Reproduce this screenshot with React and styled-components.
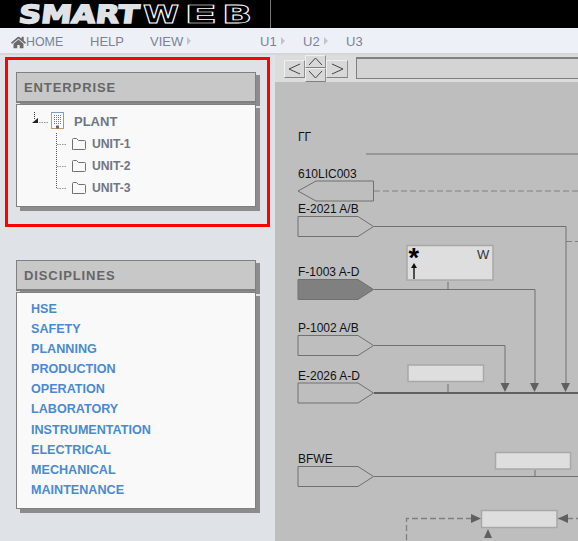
import React from 'react';
import styled, { createGlobalStyle } from 'styled-components';
import { FaHome } from 'react-icons/fa';

const GlobalStyle = createGlobalStyle`
  html, body {
    margin: 0;
    padding: 0;
    background: #dfe3e7;
    font-family: "Liberation Sans", Arial, sans-serif;
  }
`;

const Page = styled.div`
  width: 578px;
  height: 541px;
  overflow: hidden;
  display: flex;
  flex-direction: column;
`;

const Header = styled.header`
  height: 28px;
  flex: none;
  background: #000;
  display: flex;
`;

const LogoBox = styled.div`
  width: 270px;
  height: 28px;
  border-right: 1px solid #777;
`;

const MenuBar = styled.nav`
  height: 25px;
  flex: none;
  background: #eef0f8;
  display: grid;
  grid-template-columns: 90px 60px 110px 43px 43px 1fr;
  align-items: center;
  border-bottom: 2px solid #d4d6da;
`;

const MenuItem = styled.div`
  display: flex;
  align-items: center;
  font-size: 13px;
  line-height: 15px;
  color: #7a8296;
  padding-top: 1px;
`;

const HomeItem = styled(MenuItem)`
  padding-left: 11px;
  font-size: 12.4px;
  padding-top: 3px;
  svg {
    color: #6a6a6a;
    margin-right: 0;
  }
`;

const Caret = styled.span`
  width: 0;
  height: 0;
  margin-left: 4px;
  border-left: 4px solid #c2c4c8;
  border-top: 4px solid transparent;
  border-bottom: 4px solid transparent;
`;

const Body = styled.div`
  flex: 1;
  display: flex;
  min-height: 0;
`;

const Sidebar = styled.aside`
  width: 275px;
  flex: none;
  background: #dfe3e7;
  padding: 2px 0 0 5px;
  box-sizing: border-box;
`;

const Highlight = styled.div`
  width: 265px;
  height: 170px;
  box-sizing: border-box;
  border: 3px solid #ff0000;
  padding: 12px 8px;
  margin-bottom: 33px;
`;

const Panel = styled.section`
  width: 240px;
  margin-left: ${(p) => p.$indent || 0}px;
`;

const PanelTitle = styled.div`
  height: 31px;
  box-sizing: border-box;
  background: #c8c8c8;
  border: 1px solid #808080;
  border-bottom-width: 2px;
  box-shadow: 4px 3px 0 #8c8c8c;
  padding-left: 7px;
  font-size: 13px;
  font-weight: bold;
  letter-spacing: 0.9px;
  line-height: 30px;
  color: #666;
`;

const PanelBody = styled.div`
  margin-top: 1px;
  height: ${(p) => p.$height}px;
  box-sizing: border-box;
  background: #f9f9f9;
  border: 1px solid #808080;
  box-shadow: 4px 4px 0 #8c8c8c;
`;

const TreeRoot = styled.div`
  display: flex;
  align-items: center;
  height: 22px;
  padding: 5px 0 1px 14px;
`;

const RootLabel = styled.span`
  margin-left: 9px;
  font-size: 13px;
  font-weight: bold;
  color: #6f7684;
`;

const TreeRow = styled.div`
  display: flex;
  align-items: center;
  height: 22px;
  padding-left: 39px;
`;

const RowLabel = styled.span`
  margin-left: 5px;
  font-size: 12.2px;
  font-weight: bold;
  color: #6f7684;
`;

const LinkList = styled.ul`
  list-style: none;
  margin: 0;
  padding: 5.5px 0 0 14px;
`;

const LinkItem = styled.li`
  height: 20.2px;
  line-height: 20px;
  font-size: 12.6px;
  font-weight: bold;
  color: #4a8ad0;
`;

const Main = styled.main`
  flex: 1;
  display: flex;
  flex-direction: column;
  min-width: 0;
`;

const Toolbar = styled.div`
  height: 27px;
  flex: none;
  background: #dcdcdc;
  display: flex;
  align-items: center;
  padding-left: 9px;
`;

const ToolButton = styled.button`
  width: ${(p) => p.$w || 21}px;
  height: ${(p) => p.$h || 18}px;
  padding: 0;
  flex: none;
  background: #d8d8d8;
  border: 1px solid;
  border-color: #efefef #909090 #808080 #efefef;
  display: flex;
  align-items: center;
  justify-content: center;
  svg {
    display: block;
  }
`;

const UpDown = styled.div`
  display: flex;
  flex-direction: column;
  margin-top: -1px;
`;

const AddressBox = styled.div`
  flex: 1;
  height: 22px;
  margin-left: 8px;
  margin-top: -1px;
  box-sizing: border-box;
  background: #d4d4d4;
  border: 1px solid #808080;
  border-top-width: 2px;
  border-right: none;
`;

const Canvas = styled.div`
  flex: 1;
  background: #bebebe;
  min-height: 0;
  svg {
    display: block;
    font-family: "Liberation Sans", Arial, sans-serif;
  }
`;

const Chevron = ({ d, w = 15, h = 12 }) => (
  <svg width={w} height={h} viewBox={`0 0 ${w} ${h}`}>
    <path d={d} fill="none" stroke="#444" strokeWidth="1" />
  </svg>
);

// outlined letters of the logo, stretched one by one
const LogoLetter = ({ x, stretch, children }) => (
  <text
    transform={`translate(${x} 23) scale(${stretch} 1)`}
    fontFamily="DejaVu Sans"
    fontWeight="bold"
    fontSize="24"
    fill="#000"
    stroke="#fff"
    strokeWidth="1.1"
    vectorEffect="non-scaling-stroke"
  >
    {children}
  </text>
);

const Logo = () => (
  <svg width="270" height="28" viewBox="0 0 270 28">
    <g transform="translate(15 23) skewX(-7)">
      <text x="3" y="0" fontFamily="DejaVu Sans" fontWeight="bold" fontSize="25" fill="#dfe3e7" stroke="#dfe3e7" strokeWidth="1.6" textLength="120" lengthAdjust="spacingAndGlyphs">SMART</text>
    </g>
    <LogoLetter x={143} stretch={1.36}>W</LogoLetter>
    <LogoLetter x={184} stretch={2.05}>E</LogoLetter>
    <LogoLetter x={222} stretch={1.65}>B</LogoLetter>
  </svg>
);

const Expander = () => (
  <svg width="20" height="20" viewBox="0 0 20 20">
    <path d="M3.5 1v8" stroke="#333" strokeDasharray="1 1" />
    <path d="M1 12l6-5v5z" fill="#222" />
    <path d="M8 11.5h9" stroke="#999" strokeDasharray="1.5 1" />
  </svg>
);

const Building = () => (
  <svg width="14" height="18" viewBox="0 0 14 18">
    <rect x="0.5" y="0.5" width="12" height="16" fill="#fdfdfd" stroke="#c99a6b" />
    <path d="M0.5 0.5h12v16" fill="none" stroke="#7a9cc6" />
    <path d="M3 3.5h7M3 5.5h7M3 7.5h7M3 9.5h7M3 11.5h7" stroke="#778" strokeDasharray="1 1" />
    <rect x="5" y="13.5" width="3" height="3" fill="#666" />
  </svg>
);

const Folder = () => (
  <svg width="16" height="14" viewBox="0 0 16 14">
    <path d="M1.5 12.5v-10q0-1 1-1h3l2 2h6q1 0 1 1v7q0 1-1 1h-11q-1 0-1-1z" fill="none" stroke="#707070" />
  </svg>
);

const Connector = ({ last }) => (
  <svg width="15" height="22" viewBox="0 0 15 22">
    <path d={last ? 'M0.5 0v12' : 'M0.5 0v22'} stroke="#555" strokeDasharray="1 1" />
    <path d="M1 11.5h10" stroke="#999" strokeDasharray="1.5 1" />
  </svg>
);

// diagram data, page coordinates
const tags = [
  { label: '610LIC003', y: 181, left: true },
  { label: 'E-2021 A/B', y: 216.5 },
  { label: 'F-1003 A-D', y: 279.5, dark: true },
  { label: 'P-1002 A/B', y: 335.5 },
  { label: 'E-2026 A-D', y: 383 },
  { label: 'BFWE', y: 466.5 },
];

const boxes = [
  { x: 407, y: 245.5, w: 86, h: 34.5 },
  { x: 408, y: 365, w: 75.5, h: 16.5 },
  { x: 495.5, y: 452.5, w: 75, h: 16.5 },
  { x: 481.5, y: 510.5, w: 75.5, h: 17 },
];

const lines = [
  'M366 154H578',
  'M374 226.5H566V384',
  'M374 289.5H535V384',
  'M374 345.5H505V384',
  'M374 476.5H578',
  'M448 282V289M448 384V392M535 470V476',
];

const arrows = [
  'M500.5 383h9l-4.5 9z',
  'M530 383h9l-4.5 9z',
  'M561 383h9l-4.5 9z',
  'M471 514l10 4.5-10 4.5z',
  'M568 514v9l-10-4.5z',
  'M484 538l4-9 4 9z',
];

const Tag = ({ label, y, left, dark }) => {
  const points = left
    ? `298,${y + 10} 316,${y} 373.5,${y} 373.5,${y + 20} 316,${y + 20}`
    : `298,${y} 358,${y} 373.5,${y + 10} 358,${y + 20} 298,${y + 20}`;
  return (
    <g>
      <text x="298" y={y - 3.5} fontSize="12" fill="#111">{label}</text>
      <polygon points={points} fill={dark ? '#808080' : 'none'} stroke="#707070" strokeWidth="1" />
    </g>
  );
};

const Diagram = () => (
  <svg width="303" height="459" viewBox="275 82 303 459">
    <text x="298" y="141" fontSize="12" fill="#111">ГГ</text>
    {lines.map((d) => <path key={d} d={d} fill="none" stroke="#707070" strokeWidth="1" />)}
    <path d="M374 191H578M566 241.5H578" fill="none" stroke="#808080" strokeDasharray="6 3" />
    <path d="M374 393H578" stroke="#606060" strokeWidth="2" />
    <path d="M472 518.5H406.5V541M558 518.5H578" fill="none" stroke="#808080" strokeWidth="1.3" strokeDasharray="6 3" />
    {tags.map((t) => <Tag key={t.label} {...t} />)}
    {boxes.map((b) => (
      <rect key={b.y} x={b.x} y={b.y} width={b.w} height={b.h} fill="#dedede" stroke="#a8a8a8" strokeWidth="1.5" />
    ))}
    {arrows.map((d) => <path key={d} d={d} fill="#606060" />)}
    <text x="408.5" y="267" fontSize="27" fontWeight="bold" fill="#000">*</text>
    <path d="M414 279V266" stroke="#111" strokeWidth="1.4" />
    <path d="M411 268l3-5 3 5z" fill="#111" />
    <text x="477" y="259" fontSize="13" fill="#333">W</text>
  </svg>
);

const disciplines = [
  'HSE', 'SAFETY', 'PLANNING', 'PRODUCTION', 'OPERATION', 'LABORATORY',
  'INSTRUMENTATION', 'ELECTRICAL', 'MECHANICAL', 'MAINTENANCE',
];

const units = ['UNIT-1', 'UNIT-2', 'UNIT-3'];

const App = () => (
  <Page>
    <GlobalStyle />
    <Header>
      <LogoBox><Logo /></LogoBox>
    </Header>
    <MenuBar>
      <HomeItem><FaHome size={15} />HOME</HomeItem>
      <MenuItem>HELP</MenuItem>
      <MenuItem>VIEW<Caret /></MenuItem>
      <MenuItem>U1<Caret /></MenuItem>
      <MenuItem>U2<Caret /></MenuItem>
      <MenuItem>U3</MenuItem>
    </MenuBar>
    <Body>
      <Sidebar>
        <Highlight>
          <Panel>
            <PanelTitle>ENTERPRISE</PanelTitle>
            <PanelBody $height={103}>
              <TreeRoot><Expander /><Building /><RootLabel>PLANT</RootLabel></TreeRoot>
              {units.map((u, i) => (
                <TreeRow key={u}>
                  <Connector last={i === units.length - 1} />
                  <Folder />
                  <RowLabel>{u}</RowLabel>
                </TreeRow>
              ))}
            </PanelBody>
          </Panel>
        </Highlight>
        <Panel $indent={11}>
          <PanelTitle>DISCIPLINES</PanelTitle>
          <PanelBody $height={217}>
            <LinkList>
              {disciplines.map((d) => <LinkItem key={d}>{d}</LinkItem>)}
            </LinkList>
          </PanelBody>
        </Panel>
      </Sidebar>
      <Main>
        <Toolbar>
          <ToolButton><Chevron d="M13 1L2 6l11 5" /></ToolButton>
          <UpDown>
            <ToolButton $h={13}><Chevron d="M1 9l6.5-7 6.5 7" h={11} /></ToolButton>
            <ToolButton $h={14}><Chevron d="M1 2l6.5 7 6.5-7" h={11} /></ToolButton>
          </UpDown>
          <ToolButton $w={22}><Chevron d="M2 1l11 5-11 5" /></ToolButton>
          <AddressBox />
        </Toolbar>
        <Canvas><Diagram /></Canvas>
      </Main>
    </Body>
  </Page>
);

export default App;
